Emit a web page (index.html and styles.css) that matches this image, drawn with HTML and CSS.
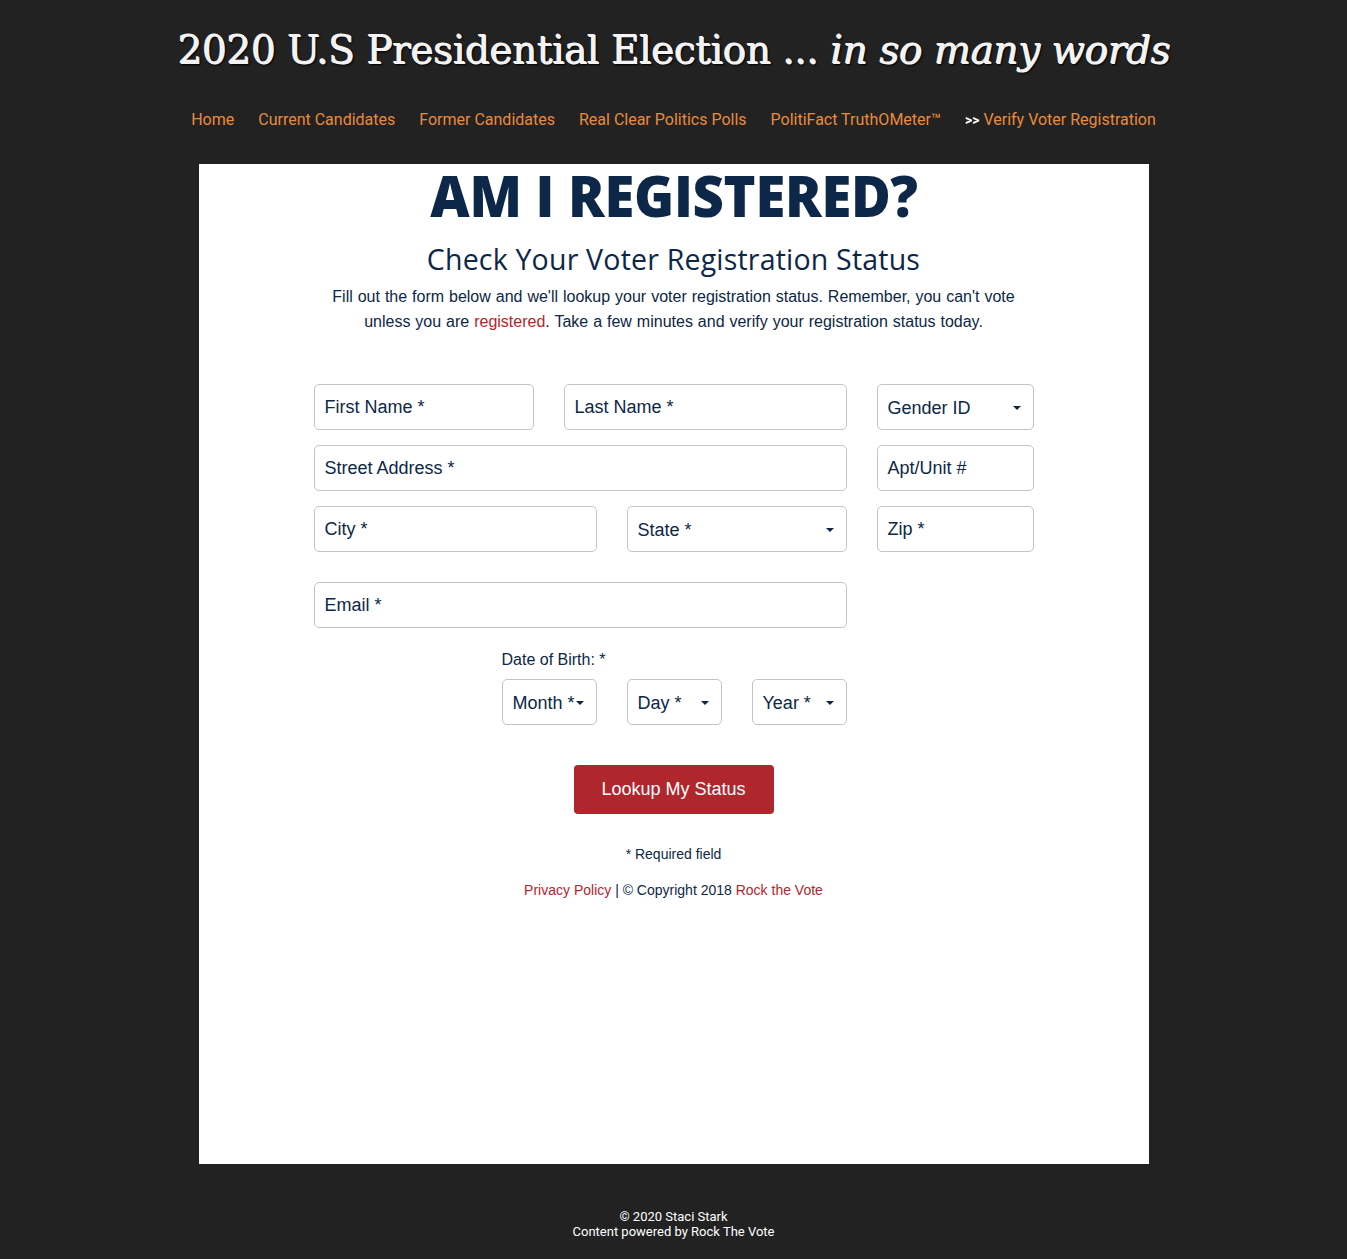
FILE: index.html
```html
<!DOCTYPE html>
<html>
<head>
<meta charset="utf-8">
<link rel="stylesheet" href="styles.css">
</head>
<body>
<header class="site-header">
  <h1 class="site-title">2020 U.S Presidential Election ... <em>in so many words</em></h1>
  <nav class="nav">
    <a href="#">Home</a>
    <a href="#">Current Candidates</a>
    <a href="#">Former Candidates</a>
    <a href="#">Real Clear Politics Polls</a>
    <a href="#">PolitiFact TruthOMeter™</a>
    <span class="nav-current"><span class="arrows">&gt;&gt;</span> <a href="#">Verify Voter Registration</a></span>
  </nav>
</header>
<main class="panel">
  <h2 class="big-title">AM I REGISTERED?</h2>
  <h3 class="sub-title">Check Your Voter Registration Status</h3>
  <p class="intro">Fill out the form below and we'll lookup your voter registration status. Remember, you can't vote unless you are <a href="#">registered</a>. Take a few minutes and verify your registration status today.</p>
  <form class="form">
    <div class="row">
      <div class="field w220">First Name *</div>
      <div class="field w283">Last Name *</div>
      <div class="field select w157">Gender ID<span class="caret"></span></div>
    </div>
    <div class="row">
      <div class="field w533">Street Address *</div>
      <div class="field w157">Apt/Unit #</div>
    </div>
    <div class="row">
      <div class="field w283">City *</div>
      <div class="field select w220">State *<span class="caret"></span></div>
      <div class="field w157">Zip *</div>
    </div>
    <div class="row row-email">
      <div class="field w533">Email *</div>
    </div>
    <div class="dob">
      <div class="dob-label">Date of Birth: *</div>
      <div class="dob-row">
        <div class="field select w95">Month *<span class="caret"></span></div>
        <div class="field select w95">Day *<span class="caret"></span></div>
        <div class="field select w95">Year *<span class="caret"></span></div>
      </div>
    </div>
    <div class="actions">
      <button type="button" class="btn">Lookup My Status</button>
    </div>
    <p class="required">* Required field</p>
    <p class="legal"><a href="#">Privacy Policy</a> | © Copyright 2018 <a href="#">Rock the Vote</a></p>
  </form>
</main>
<footer class="site-footer">
  <div>© 2020 Staci Stark</div>
  <div>Content powered by Rock The Vote</div>
</footer>
</body>
</html>
```
FILE: styles.css
```css
* { box-sizing: border-box; }
html, body { margin: 0; padding: 0; }
body {
  background: #222222;
  font-family: "Liberation Sans", Arial, sans-serif;
  color: #0c2748;
}
.site-header {
  padding-top: 24px;
  text-align: center;
}
.site-title {
  margin: 0;
  font-family: "DejaVu Serif", "Liberation Serif", serif;
  font-weight: normal;
  font-size: 39px;
  line-height: 52px;
  color: #f3f3f3;
  letter-spacing: -0.4px;
  text-shadow: 1px 1px 0 #f3f3f3, 2px 2px 2px #000;
}
.site-title em { font-style: italic; }
.nav {
  display: flex;
  justify-content: center;
  gap: 24px;
  margin-top: 32px;
  height: 36px;
  font-family: Roboto, "Noto Sans", sans-serif;
  font-size: 16px;
  line-height: 24px;
}
.nav a { color: #e98b3a; text-decoration: none; }
.nav-current .arrows { color: #ffffff; font-weight: bold; font-size: 14px; }
.panel {
  width: 950px;
  height: 1000px;
  margin: 20px auto 0;
  background: #ffffff;
  text-align: center;
  padding-top: 1px;
}
.big-title {
  margin: 0;
  font-family: "Open Sans", Roboto, sans-serif;
  font-weight: 800;
  font-size: 56px;
  line-height: 60px;
  letter-spacing: -0.3px;
  color: #0c2748;
  transform: scaleX(0.97);
}
.sub-title {
  margin: 16px 0 0;
  font-family: "Open Sans", "Noto Sans", sans-serif;
  font-weight: normal;
  font-size: 28.5px;
  line-height: 36px;
  color: #0c2748;
  letter-spacing: 0.2px;
}
.intro {
  margin: 7px auto 0;
  width: 700px;
  font-size: 16px;
  line-height: 25px;
  word-spacing: 0.5px;
  color: #0c2748;
}
.intro a { color: #b5252c; text-decoration: none; }
.form {
  width: 720px;
  margin: 50px auto 0;
  text-align: left;
}
.row {
  display: flex;
  gap: 30px;
  margin-bottom: 15px;
}
.row-email { margin-top: 30px; }
.field {
  position: relative;
  height: 46px;
  border: 1px solid #c4c4c4;
  border-radius: 5px;
  padding: 0 10px;
  font-size: 18px;
  line-height: 44px;
  color: #0c2748;
  white-space: nowrap;
}
.select { line-height: 46px; }
.caret {
  position: absolute;
  right: 12px;
  top: 21px;
  width: 0;
  height: 0;
  border-left: 4px solid transparent;
  border-right: 4px solid transparent;
  border-top: 4px solid #0c2748;
}
.w220 { width: 220px; }
.w283 { width: 283px; }
.w157 { width: 157px; }
.w533 { width: 533px; }
.w95 { width: 95px; }
.dob {
  width: 533px;
  display: flex;
  flex-direction: column;
  align-items: flex-end;
  margin-top: 22px;
}
.dob-label {
  width: 345px;
  font-size: 16px;
  line-height: 20px;
  margin-bottom: 9px;
}
.dob-row {
  display: flex;
  gap: 30px;
}
.actions {
  display: flex;
  justify-content: center;
  margin-top: 40px;
}
.btn {
  width: 200px;
  height: 49px;
  border: none;
  border-radius: 4px;
  background: #b0262d;
  color: #ffffff;
  font-family: "Liberation Sans", Arial, sans-serif;
  font-size: 18px;
}
.required {
  margin: 31px 0 0;
  text-align: center;
  font-size: 14px;
  line-height: 18px;
}
.legal {
  margin: 18px 0 0;
  text-align: center;
  font-size: 14px;
  line-height: 18px;
}
.legal a { color: #b5252c; text-decoration: none; }
.site-footer {
  text-align: center;
  color: #ffffff;
  font-family: Roboto, "Noto Sans", sans-serif;
  font-weight: 400;
  font-size: 13px;
  line-height: 15px;
  padding-top: 45px;
  padding-bottom: 20px;
}
```
